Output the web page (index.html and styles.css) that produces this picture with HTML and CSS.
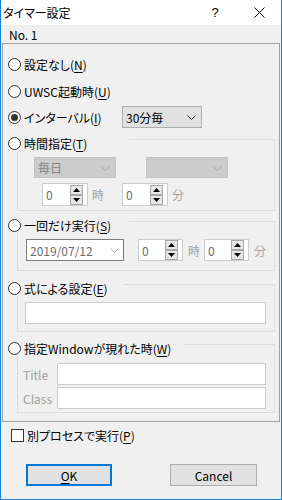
FILE: index.html
```html
<!DOCTYPE html>
<html lang="ja">
<head>
  <meta charset="UTF-8" />
  <title>タイマー設定</title>
  <link rel="stylesheet" href="styles.css">
</head>
<body>
  <div class="window">
    <div class="titlebar">
      <span class="title">タイマー設定</span>
      <span class="help">?</span>
      <span class="close">
        <svg width="11" height="11" viewBox="0 0 11 11"><path d="M0.5 0.5 L10.5 10.5 M10.5 0.5 L0.5 10.5" stroke="#000" stroke-width="1" fill="none"/></svg>
      </span>
    </div>
    <div class="name">No. 1</div>

    <div class="panel">
      <div class="opt row1"><span class="radio"></span>設定なし(<u>N</u>)</div>
      <div class="opt row2"><span class="radio"></span>UWSC起動時(<u>U</u>)</div>
      <div class="opt row3">
        <span class="lead"><span class="radio on"></span>インターバル(<u>I</u>)</span>
        <span class="select">30分毎
          <svg class="chev" width="9" height="5" viewBox="0 0 9 5"><polyline points="0.5,0.5 4.5,4.5 8.5,0.5" fill="none" stroke="#333"/></svg>
        </span>
      </div>

      <fieldset class="group g1">
        <legend style="width:121px"><span class="opt"><span class="radio"></span>時間指定(<u>T</u>)</span></legend>
        <div class="gbody">
          <div class="line">
            <span class="select off">毎日
              <svg class="chev" width="9" height="5" viewBox="0 0 9 5"><polyline points="0.5,0.5 4.5,4.5 8.5,0.5" fill="none" stroke="#a8a8a8"/></svg>
            </span>
            <span class="select off second">
              <svg class="chev" width="9" height="5" viewBox="0 0 9 5"><polyline points="0.5,0.5 4.5,4.5 8.5,0.5" fill="none" stroke="#a8a8a8"/></svg>
            </span>
          </div>
          <div class="line spins">
            <span class="spin"><span class="val">0</span>
              <span class="arrows">
                <span class="btn"><svg width="7" height="4" viewBox="0 0 7 4"><path d="M0 4 L3.5 0 L7 4 Z"/></svg></span>
                <span class="btn"><svg width="7" height="4" viewBox="0 0 7 4"><path d="M0 0 L3.5 4 L7 0 Z"/></svg></span>
              </span>
            </span>
            <span class="unit">時</span>
            <span class="spin"><span class="val">0</span>
              <span class="arrows">
                <span class="btn"><svg width="7" height="4" viewBox="0 0 7 4"><path d="M0 4 L3.5 0 L7 4 Z"/></svg></span>
                <span class="btn"><svg width="7" height="4" viewBox="0 0 7 4"><path d="M0 0 L3.5 4 L7 0 Z"/></svg></span>
              </span>
            </span>
            <span class="unit">分</span>
          </div>
        </div>
      </fieldset>

      <fieldset class="group g2">
        <legend style="width:121px"><span class="opt"><span class="radio"></span>一回だけ実行(<u>S</u>)</span></legend>
        <div class="gbody">
          <div class="line">
            <span class="date">2019/07/12
              <svg class="chev" width="9" height="5" viewBox="0 0 9 5"><polyline points="0.5,0.5 4.5,4.5 8.5,0.5" fill="none" stroke="#b0b0b0"/></svg>
            </span>
            <span class="spin"><span class="val">0</span>
              <span class="arrows">
                <span class="btn"><svg width="7" height="4" viewBox="0 0 7 4"><path d="M0 4 L3.5 0 L7 4 Z"/></svg></span>
                <span class="btn"><svg width="7" height="4" viewBox="0 0 7 4"><path d="M0 0 L3.5 4 L7 0 Z"/></svg></span>
              </span>
            </span>
            <span class="unit">時</span>
            <span class="spin"><span class="val">0</span>
              <span class="arrows">
                <span class="btn"><svg width="7" height="4" viewBox="0 0 7 4"><path d="M0 4 L3.5 0 L7 4 Z"/></svg></span>
                <span class="btn"><svg width="7" height="4" viewBox="0 0 7 4"><path d="M0 0 L3.5 4 L7 0 Z"/></svg></span>
              </span>
            </span>
            <span class="unit">分</span>
          </div>
        </div>
      </fieldset>

      <fieldset class="group g3">
        <legend style="width:116px"><span class="opt"><span class="radio"></span>式による設定(<u>E</u>)</span></legend>
        <div class="gbody">
          <span class="field"></span>
        </div>
      </fieldset>

      <fieldset class="group g4">
        <legend style="width:176px"><span class="opt"><span class="radio"></span>指定Windowが現れた時(<u>W</u>)</span></legend>
        <div class="gbody">
          <div class="line"><span class="tag">Title</span><span class="field"></span></div>
          <div class="line"><span class="tag">Class</span><span class="field"></span></div>
        </div>
      </fieldset>
    </div>

    <div class="opt check"><span class="box"></span>別プロセスで実行(<u>P</u>)</div>

    <div class="buttons">
      <span class="button default"><u>O</u>K</span>
      <span class="button cancel">Cancel</span>
    </div>
  </div>
</body>
</html>
```

FILE: styles.css
```css
* {
  box-sizing: border-box;
}
body {
  margin: 0;
  font-family: "Noto Sans CJK JP", sans-serif;
  font-size: 12px;
  font-feature-settings: "palt";
  color: #000;
}
u {
  text-decoration-thickness: 1px;
  text-underline-offset: 2px;
}
.window {
  width: 282px;
  height: 500px;
  border: 1px solid #1883d7;
  border-top: none;
  background-color: #f0f0f0;
}
.titlebar {
  height: 25px;
  background-color: #fff;
  display: flex;
  align-items: center;
}
.title {
  flex: 1;
  padding-left: 2px;
}
.help {
  width: 46px;
  text-align: center;
  font-family: "Liberation Sans", sans-serif;
  font-size: 13px;
}
.close {
  width: 43px;
  display: flex;
  justify-content: center;
}
.name {
  height: 18px;
  padding: 2px 0 0 8px;
  line-height: 16px;
}
.panel {
  margin: 0 1px;
  border: 1px solid #a0a0a0;
  padding: 12px 0 8px 0;
}
.opt {
  display: flex;
  align-items: center;
  height: 16px;
  white-space: nowrap;
}
.row1, .row2 {
  padding-left: 5px;
}
.row2 {
  margin-top: 11px;
}
.row3 {
  margin-top: 7px;
  height: 22px;
  padding-left: 5px;
}
.lead {
  display: flex;
  align-items: center;
  width: 114px;
}
.radio {
  width: 13px;
  height: 13px;
  border: 1px solid #333;
  border-radius: 50%;
  background-color: #fff;
  margin-right: 3px;
  display: flex;
  align-items: center;
  justify-content: center;
  flex: none;
}
.radio.on::after {
  content: "";
  width: 7px;
  height: 7px;
  border-radius: 50%;
  background-color: #333;
}
.select {
  position: relative;
  display: flex;
  align-items: center;
  width: 80px;
  height: 22px;
  padding-left: 3px;
  border: 1px solid #adadad;
  background-color: #e1e1e1;
}
.chev {
  position: absolute;
  right: 5px;
  top: 8px;
}
.select.off {
  width: 82px;
  height: 21px;
  border-color: #c4c4c4;
  background-color: #cccccc;
  color: #838383;
}
.select.second {
  margin-left: 30px;
}

.group {
  margin: 0 4px 0 14px;
  padding: 0;
  border: 1px solid #dcdcdc;
  min-width: 0;
}
.group legend {
  margin-left: -10px;
  padding: 9px 0 0 0;
}
.group legend .opt {
  height: 15px;
}
.g1 { margin-top: -1px; }
.g2 { margin-top: -2px; }
.g3 { margin-top: 1px; }
.g4 { margin-top: 0; }

.line {
  display: flex;
  align-items: center;
}
.g1 .gbody {
  padding: 6px 0 4px 16px;
}
.g1 .spins {
  margin-top: 5px;
  padding-left: 8px;
}
.spin {
  display: flex;
  align-items: center;
  width: 46px;
  height: 23px;
  border: 1px solid #cccccc;
  background-color: #fff;
  color: #6d6d6d;
}
.val {
  padding-left: 3px;
  flex: 1;
}
.arrows {
  display: flex;
  flex-direction: column;
  margin-right: 4px;
}
.btn {
  width: 13px;
  height: 10px;
  border: 1px solid #a8a8a8;
  background-color: #e6e6e6;
  display: flex;
  align-items: center;
  justify-content: center;
}
.btn + .btn {
  margin-top: 0;
}
.btn svg {
  fill: #000;
}
.unit {
  color: #a0a0a0;
  margin-left: 4px;
  width: 12px;
}
.g1 .unit + .spin {
  margin-left: 18px;
}

.g2 .gbody {
  padding: 6px 0 9px 8px;
}
.date {
  position: relative;
  display: flex;
  align-items: center;
  width: 98px;
  height: 22px;
  padding-left: 3px;
  border: 1px solid #7a7a7a;
  background-color: #fff;
  color: #6d6d6d;
}
.date .chev {
  right: 4px;
}
.g2 .spin {
  width: 45px;
  height: 22px;
}
.g2 .date + .spin {
  margin-left: 14px;
}
.g2 .unit {
  margin-left: 3px;
}
.g2 .unit + .spin {
  margin-left: 4px;
}
.g2 .spin + .unit {
  margin-left: 5px;
}

.field {
  display: block;
  height: 22px;
  border: 1px solid #cccccc;
  background-color: #fff;
}
.g3 .gbody {
  padding: 6px 8px 7px 7px;
}
.g4 .gbody {
  padding: 7px 8px 3px 5px;
}
.g4 .line + .line {
  margin-top: 2px;
}
.tag {
  width: 34px;
  color: #a0a0a0;
}
.g4 .field {
  flex: 1;
}

.check {
  margin: 7px 0 0 10px;
  height: 13px;
}
.box {
  width: 13px;
  height: 13px;
  border: 1px solid #333;
  background-color: #fff;
  margin-right: 3px;
}
.buttons {
  display: flex;
  margin-top: 22px;
  padding-left: 25px;
}
.button {
  display: flex;
  align-items: center;
  justify-content: center;
  width: 86px;
  height: 22px;
  background-color: #e1e1e1;
  border: 1px solid #adadad;
}
.button.default {
  border: 2px solid #0078d7;
}
.button.cancel {
  width: 87px;
  margin-left: 58px;
}
```
